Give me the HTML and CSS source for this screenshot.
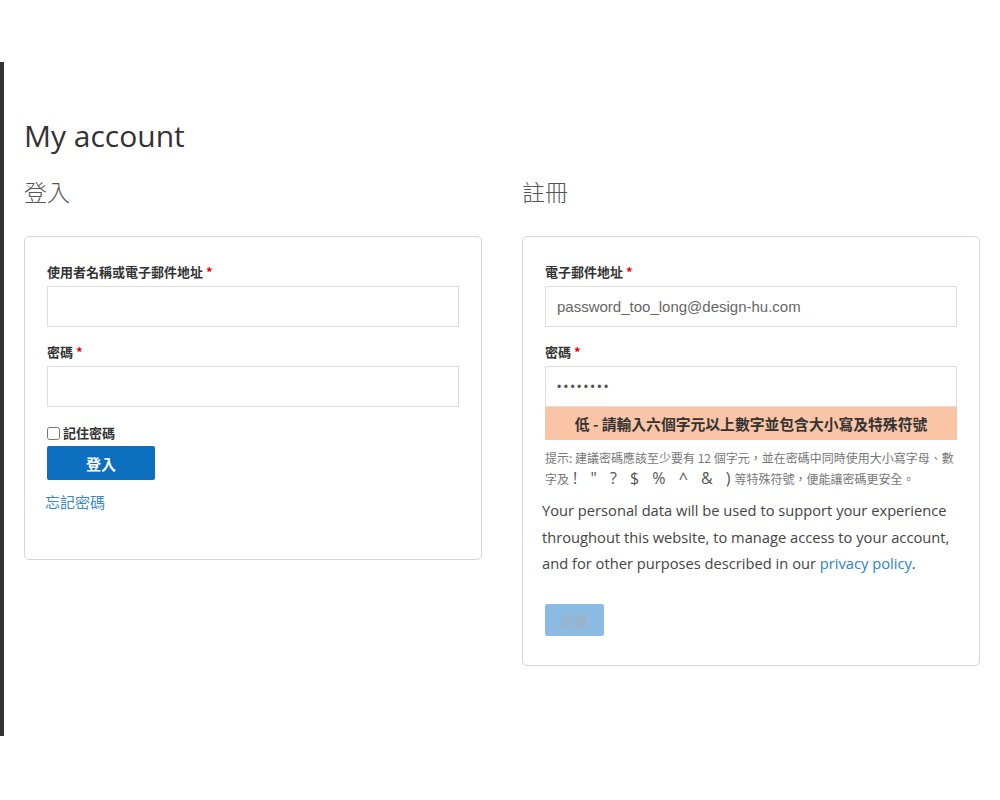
FILE: index.html
```html
<!DOCTYPE html>
<html lang="zh-Hant">
<head>
    <meta charset="UTF-8">
    <meta name="viewport" content="width=device-width, initial-scale=1.0">
    <title>My account</title>
    <link rel="stylesheet" href="styles.css">
</head>
<body>

<div class="page">
    <h1 class="page-title">My account</h1>

    <div class="columns">
        <div class="col">
            <h2>登入</h2>
            <form class="card">
                <label class="field-label">使用者名稱或電子郵件地址 <span class="required">*</span></label>
                <input type="text" class="text-input">

                <label class="field-label">密碼 <span class="required">*</span></label>
                <input type="password" class="text-input">

                <label class="remember"><input type="checkbox"> 記住密碼</label>
                <button type="button" class="btn">登入</button>

                <a href="#" class="lost-password">忘記密碼</a>
            </form>
        </div>

        <div class="col">
            <h2>註冊</h2>
            <form class="card card-register">
                <label class="field-label">電子郵件地址 <span class="required">*</span></label>
                <input type="email" class="text-input" value="password_too_long@design-hu.com">

                <label class="field-label">密碼 <span class="required">*</span></label>
                <input type="password" class="text-input pw-input" value="12345678">
                <div class="strength">低 - 請輸入六個字元以上數字並包含大小寫及特殊符號</div>
                <p class="hint">提示: 建議密碼應該至少要有 12 個字元，並在密碼中同時使用大小寫字母、數字及<span class="symbols">! " ? $ % ^ &amp; )</span>等特殊符號，便能讓密碼更安全。</p>

                <p class="privacy">Your personal data will be used to support your experience throughout this website, to manage access to your account, and for other purposes described in our <a href="#">privacy policy</a>.</p>

                <button type="button" class="btn btn-disabled" disabled>註冊</button>
            </form>
        </div>
    </div>
</div>

</body>
</html>
```

FILE: styles.css
```css
body {
    margin: 0;
    background: #fff;
    color: #333;
    font-family: "Open Sans", "Noto Sans CJK TC", sans-serif;
}

.page {
    margin-top: 62px;
    height: 674px;
    border-left: 4px solid #333;
    padding: 54px 20px 0 20px;
    box-sizing: border-box;
}

.page-title {
    margin: 0;
    font-size: 30px;
    line-height: 40px;
    font-weight: 400;
    color: #333;
}

.columns {
    display: grid;
    grid-template-columns: 1fr 1fr;
    column-gap: 40px;
    margin-top: 19px;
}

h2 {
    margin: 0 0 27px 0;
    font-size: 23px;
    line-height: 34px;
    font-weight: 300;
    color: #555;
}

.card {
    border: 1px solid #d6d6d6;
    border-radius: 5px;
    padding: 25px 22px 46px 22px;
    display: flex;
    flex-direction: column;
    align-items: flex-start;
}

.card-register {
    padding-bottom: 29px;
}

.field-label {
    font-family: "Noto Sans CJK TC", sans-serif;
    font-size: 13px;
    line-height: 20px;
    font-weight: 700;
    color: #333;
    margin-bottom: 4px;
}

.required {
    color: #e00;
}

.text-input {
    width: 100%;
    height: 41px;
    box-sizing: border-box;
    border: 1px solid #ddd;
    padding: 0 11px;
    margin: 0 0 15px 0;
    font-family: "Liberation Sans", sans-serif;
    font-size: 15px;
    color: #666;
    background: #fff;
    outline: none;
}

.pw-input {
    margin-bottom: 0;
    color: #555;
    letter-spacing: 2.5px;
    font-size: 12px;
}

.remember {
    display: flex;
    align-items: center;
    gap: 3px;
    margin-top: 1px;
    font-family: "Noto Sans CJK TC", sans-serif;
    font-size: 13px;
    line-height: 20px;
    font-weight: 700;
    color: #333;
}

.remember input {
    margin: 0;
    width: 13px;
    height: 13px;
}

.btn {
    margin-top: 3px;
    width: 108px;
    height: 34px;
    border: none;
    border-radius: 2px;
    background: #0c6fbf;
    color: #fff;
    font-family: "Noto Sans CJK TC", sans-serif;
    font-size: 15px;
    font-weight: 700;
    cursor: pointer;
}

.lost-password {
    margin: 11px 0 0 -2px;
    font-family: "Noto Sans CJK TC", sans-serif;
    font-size: 15px;
    line-height: 22px;
    color: #3a8bcb;
    text-decoration: none;
}

.strength {
    width: 100%;
    height: 33px;
    box-sizing: border-box;
    background: #fac5a6;
    text-align: center;
    font-family: "Noto Sans CJK TC", sans-serif;
    font-size: 14.8px;
    line-height: 33px;
    font-weight: 700;
    color: #333;
}

.hint {
    margin: 7px 0 0 0;
    font-family: "Noto Sans CJK TC", sans-serif;
    font-size: 12px;
    line-height: 21px;
    color: #777;
}

.hint .symbols {
    font-family: "Open Sans", sans-serif;
    font-size: 16px;
    word-spacing: 9px;
    margin: 0 4px;
    color: #555;
}

.privacy {
    margin: 8px 0 0 -3px;
    font-family: "Open Sans", "Noto Sans CJK TC", sans-serif;
    font-size: 14.7px;
    line-height: 26.5px;
    color: #444;
}

.privacy a {
    color: #2a84c8;
    text-decoration: none;
}

.btn-disabled {
    margin-top: 27px;
    width: 59px;
    height: 32px;
    background: #8bbbe3;
    color: #9fb2c4;
    font-size: 14px;
    cursor: default;
}
```
